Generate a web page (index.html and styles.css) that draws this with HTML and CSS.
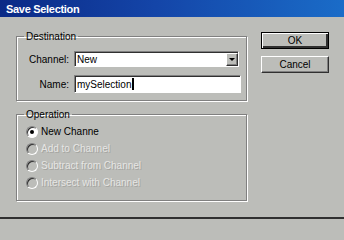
FILE: index.html
```html
<!DOCTYPE html>
<html>
<head>
<meta charset="utf-8">
<link rel="stylesheet" href="styles.css">
</head>
<body>
<div class="dialog">
  <div class="titlebar"><span class="title">Save Selection</span></div>
  <div class="content">
    <div class="main">
      <fieldset class="group dest">
        <legend>Destination</legend>
        <div class="row">
          <span class="label">Channel:</span>
          <div class="select"><span class="val">New</span><span class="drop"><span class="tri"></span></span></div>
        </div>
        <div class="row row2">
          <span class="label">Name:</span>
          <div class="field"><span class="val">mySelection</span><span class="caret"></span></div>
        </div>
      </fieldset>
      <fieldset class="group op">
        <legend>Operation</legend>
        <div class="radio"><span class="dot checked"></span><span>New Channe</span></div>
        <div class="radio off"><span class="dot"></span><span class="dis">Add to Channel</span></div>
        <div class="radio off"><span class="dot"></span><span class="dis">Subtract from Channel</span></div>
        <div class="radio off"><span class="dot"></span><span class="dis">Intersect with Channel</span></div>
      </fieldset>
    </div>
    <div class="buttons">
      <div class="btn default">OK</div>
      <div class="btn">Cancel</div>
    </div>
  </div>
</div>
</body>
</html>
```
FILE: styles.css
```css
html, body {
  margin: 0;
  padding: 0;
  background: #bcbdb9;
}
.dialog {
  width: 344px;
  height: 219px;
  box-sizing: border-box;
  background: #bcbdb9;
  border-bottom: 2px solid #303030;
  font-family: "Liberation Sans", Arial, sans-serif;
  font-size: 10px;
  color: #000;
  overflow: hidden;
}
.titlebar {
  height: 17px;
  background: linear-gradient(90deg, #0b2a86 0%, #1445a8 45%, #1a6cc8 100%);
  display: flex;
  align-items: center;
  padding-left: 6px;
}
.title {
  color: #fff;
  font-weight: bold;
  font-size: 11px;
  letter-spacing: -0.3px;
  padding-top: 1px;
}
.content {
  display: flex;
  padding-left: 16px;
}
.main {
  width: 231px;
  margin-top: 13px;
}
.group {
  margin: 0;
  padding: 0;
  border: 1px solid #808080;
  box-shadow: inset 1px 1px 0 #fff, 1px 1px 0 #fff;
  min-width: 0;
}
.group legend {
  margin-left: 7px;
  padding: 0 2px;
  line-height: 13px;
  color: #000;
}
.dest {
  height: 71px;
  box-sizing: border-box;
  padding-top: 8px;
}
.row {
  display: flex;
  align-items: center;
}
.row2 {
  margin-top: 8px;
}
.label {
  width: 52px;
  text-align: right;
  margin-right: 5px;
}
.select {
  width: 165px;
  height: 16px;
  box-sizing: border-box;
  background: #fff;
  border-top: 1px solid #808080;
  border-left: 1px solid #808080;
  border-right: 1px solid #fff;
  border-bottom: 1px solid #fff;
  box-shadow: inset 1px 1px 0 #303030;
  display: flex;
  align-items: center;
  justify-content: space-between;
}
.val {
  padding-left: 2px;
  font-size: 10px;
}
.drop {
  width: 12px;
  height: 13px;
  margin-top: 1px;
  background: #bcbdb9;
  border-top: 1px solid #fff;
  border-left: 1px solid #fff;
  box-shadow: inset -1px -1px 0 #808080;
  border-right: 1px solid #303030;
  border-bottom: 1px solid #303030;
  box-sizing: border-box;
  display: flex;
  align-items: center;
  justify-content: center;
}
.tri {
  width: 0;
  height: 0;
  border-left: 3px solid transparent;
  border-right: 3px solid transparent;
  border-top: 3px solid #000;
}
.field {
  width: 167px;
  height: 18px;
  box-sizing: border-box;
  background: #fff;
  border-top: 1px solid #808080;
  border-left: 1px solid #808080;
  border-right: 1px solid #fff;
  border-bottom: 1px solid #fff;
  box-shadow: inset 1px 1px 0 #303030;
  display: flex;
  align-items: center;
}
.caret {
  width: 2px;
  height: 12px;
  background: #000;
  margin-left: 1px;
}
.op {
  margin-top: 7px;
  height: 93px;
  box-sizing: border-box;
  padding-top: 2px;
}
.radio {
  height: 17px;
  display: flex;
  align-items: center;
  padding-left: 9px;
}
.dot {
  width: 12px;
  height: 12px;
  box-sizing: border-box;
  border-radius: 50%;
  border: 1px solid;
  border-color: #808080 #fff #fff #808080;
  box-shadow: inset 1px 1px 0 #303030;
  background: #bcbdb9;
  margin-right: 3px;
  position: relative;
}
.dot.checked {
  background: #fff;
}
.dot.checked::after {
  content: "";
  position: absolute;
  left: 3px;
  top: 3px;
  width: 4px;
  height: 4px;
  border-radius: 50%;
  background: #000;
}
.dis {
  color: #e6e6e4;
  text-shadow: 1px 1px 0 #a4a4a0;
}
.buttons {
  margin-left: 14px;
  margin-top: 15px;
  width: 68px;
  display: flex;
  flex-direction: column;
  gap: 7px;
}
.btn {
  height: 17px;
  box-sizing: border-box;
  background: #bcbdb9;
  border-top: 1px solid #fff;
  border-left: 1px solid #fff;
  border-right: 1px solid #303030;
  border-bottom: 1px solid #303030;
  box-shadow: inset -1px -1px 0 #808080;
  display: flex;
  align-items: center;
  justify-content: center;
  font-size: 10px;
}
.btn.default {
  border: 1px solid #000;
  box-shadow: inset 1px 1px 0 #fff, inset -2px -2px 0 #303030;
}
```
